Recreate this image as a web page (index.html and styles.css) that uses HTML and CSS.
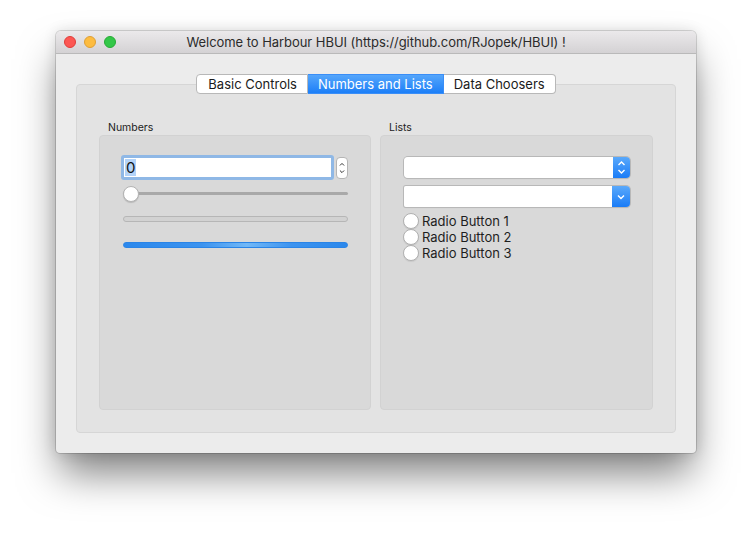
FILE: index.html
```html
<!DOCTYPE html>
<html>
<head>
<meta charset="utf-8">
<link rel="stylesheet" href="styles.css">
</head>
<body>
<div class="desktop">
  <div class="window">
    <div class="titlebar">
      <div class="lights">
        <span class="light red"></span>
        <span class="light yellow"></span>
        <span class="light green"></span>
      </div>
      <div class="title">Welcome to Harbour HBUI (https://github.com/RJopek/HBUI) !</div>
    </div>
    <div class="content">
      <div class="tabs">
        <div class="tab">Basic Controls</div>
        <div class="tab active">Numbers and Lists</div>
        <div class="tab">Data Choosers</div>
      </div>
      <div class="pane">
        <div class="group-col">
          <div class="group-label">Numbers</div>
          <div class="group left">
            <div class="spin-row">
              <div class="field focus"><span class="sel">0</span></div>
              <div class="stepper">
                <svg width="12" height="22" viewBox="0 0 12 22"><path d="M3.5 8 L6 5.5 L8.5 8" fill="none" stroke="#333" stroke-width="1.2"/><path d="M3.5 14 L6 16.5 L8.5 14" fill="none" stroke="#333" stroke-width="1.2"/></svg>
              </div>
            </div>
            <div class="slider">
              <div class="track"></div>
              <div class="knob"></div>
            </div>
            <div class="progress empty"></div>
            <div class="progress busy"></div>
          </div>
        </div>
        <div class="group-col">
          <div class="group-label">Lists</div>
          <div class="group right">
            <div class="popup">
              <div class="popup-body"></div>
              <div class="popup-btn">
                <svg width="17" height="21" viewBox="0 0 17 21"><path d="M5.5 8 L8.5 5 L11.5 8" fill="none" stroke="#fff" stroke-width="1.4"/><path d="M5.5 13 L8.5 16 L11.5 13" fill="none" stroke="#fff" stroke-width="1.4"/></svg>
              </div>
            </div>
            <div class="popup combo">
              <div class="popup-body"></div>
              <div class="popup-btn">
                <svg width="18" height="21" viewBox="0 0 18 21"><path d="M6 9.5 L9 12.5 L12 9.5" fill="none" stroke="#fff" stroke-width="1.4"/></svg>
              </div>
            </div>
            <div class="radios">
              <label class="radio"><span class="circle"></span>Radio Button 1</label>
              <label class="radio"><span class="circle"></span>Radio Button 2</label>
              <label class="radio"><span class="circle"></span>Radio Button 3</label>
            </div>
          </div>
        </div>
      </div>
    </div>
  </div>
</div>
</body>
</html>
```
FILE: styles.css
```css
* { box-sizing: border-box; }
html, body { margin: 0; padding: 0; background: #ffffff; }
html { height: 100%; }
body { min-height: 534px; font-family: Inter, "Noto Sans", "Liberation Sans", sans-serif; color: #262626; }

.desktop { padding: 31px 0 0 56px; min-height: 534px; }

.window {
  width: 640px;
  height: 422px;
  background: #ececec;
  border-radius: 5px 5px 4px 4px;
  box-shadow: 0 0 0 1px rgba(0,0,0,0.14), 0 0 14px rgba(0,0,0,0.12), 0 24px 40px -4px rgba(0,0,0,0.5);
  overflow: hidden;
}

.titlebar {
  position: relative;
  height: 23px;
  background: linear-gradient(#ebe9eb, #d4d2d4);
  border-bottom: 1px solid #b9b9b9;
  display: flex;
  align-items: center;
  justify-content: center;
}
.lights {
  position: absolute;
  left: 8px;
  top: 5px;
  display: flex;
  gap: 8px;
}
.light { width: 12px; height: 12px; border-radius: 50%; display: block; }
.red { background: #fc5753; border: 1px solid #df3d39; }
.yellow { background: #fdbc40; border: 1px solid #de9f34; }
.green { background: #33c748; border: 1px solid #27aa35; }
.title { font-size: 13px; color: #2b2b2b; letter-spacing: -0.05px; }

.content { padding: 20px 20px 20px 20px; }

.tabs {
  position: relative;
  z-index: 1;
  display: flex;
  justify-content: center;
  height: 20px;
  margin-bottom: -10px;
}
.tab {
  height: 20px;
  line-height: 18px;
  font-size: 13px;
  color: #1a1a1a;
  background: #ffffff;
  border: 1px solid #b8b8b8;
  border-left: none;
  padding: 0 10px;
}
.tab:first-child { border-left: 1px solid #b8b8b8; border-radius: 4px 0 0 4px; padding-left: 11px; }
.tab:last-child { border-radius: 0 4px 4px 0; }
.tab.active {
  background: linear-gradient(#55a6fb, #1c7ff8);
  border-color: #3a8ef7;
  color: #ffffff;
}

.pane {
  height: 349px;
  background: #e3e3e3;
  border: 1px solid #d6d6d6;
  border-radius: 4px;
  padding: 36px 22px 22px 22px;
  display: flex;
  gap: 9px;
}
.group-col { display: flex; flex-direction: column; flex: 1; }
.group-label { font-size: 10.5px; color: #222; height: 14px; line-height: 14px; padding-left: 9px; }
.group {
  flex: 1;
  background: #d9d9d9;
  border: 1px solid #d2d2d2;
  border-radius: 4px;
}
.group.left { padding: 19px 22px 0 21px; }
.group.right { padding: 20px 22px 0 23px; }

.spin-row { display: flex; align-items: center; gap: 2px; height: 25px; }
.field {
  width: 213px;
  height: 25px;
  background: #fff;
  border: 3px solid #8fb8e6;
  border-radius: 3px;
  padding-left: 1px;
  display: flex;
  align-items: center;
}
.sel { background: #b3d3f8; font-size: 15px; line-height: 17px; color: #111; padding: 0 1px; }
.stepper {
  width: 12px;
  height: 22px;
  background: #fff;
  border: 1px solid #b5b5b5;
  border-radius: 4px;
  display: flex;
  align-items: center;
  justify-content: center;
}
.stepper svg { display: block; }

.slider { position: relative; height: 16px; margin-top: 6px; margin-left: 2px; }
.track { position: absolute; left: 0; right: 0; top: 6px; height: 3px; background: #a9a9a9; border-radius: 2px; }
.knob {
  position: absolute; left: 0; top: 0;
  width: 16px; height: 16px; border-radius: 50%;
  background: #fff;
  border: 1px solid #b3b3b3;
  box-shadow: 0 1px 1px rgba(0,0,0,0.15);
}

.progress { height: 6px; margin-left: 2px; border-radius: 3px; }
.progress.empty { margin-top: 14px; background: #d2d2d2; border: 1px solid #b6b6b6; }
.progress.busy {
  margin-top: 20px;
  background: linear-gradient(90deg, #2b88ec 0%, #3c93ef 35%, #72b8f7 55%, #3c93ef 75%, #2b88ec 100%);
  border: 1px solid #2a84e6;
}

.popup {
  display: flex;
  height: 21px;
  width: 226px;
  margin-top: 1px;
  border-radius: 4px;
  box-shadow: 0 0 0 1px #b8b8b8, 0 1px 1px rgba(0,0,0,0.12);
  overflow: hidden;
}
.popup-body { flex: 1; background: #fff; }
.popup-btn { width: 17px; background: linear-gradient(#5aa9fb, #1a7cf7); display: flex; align-items: center; justify-content: center; }
.popup-btn svg { display: block; }
.popup.combo { margin-top: 8px; border-radius: 2px 4px 4px 2px; }
.popup.combo .popup-btn { width: 18px; }

.radios { margin-top: 6px; margin-left: -1px; display: flex; flex-direction: column; }
.radio { display: flex; align-items: center; height: 16px; font-size: 13px; color: #1e1e1e; }
.circle {
  width: 16px; height: 16px; border-radius: 50%;
  background: #fff;
  border: 1px solid #b0b0b0;
  margin-right: 3px;
  box-shadow: 0 1px 1px rgba(0,0,0,0.08);
}
```
